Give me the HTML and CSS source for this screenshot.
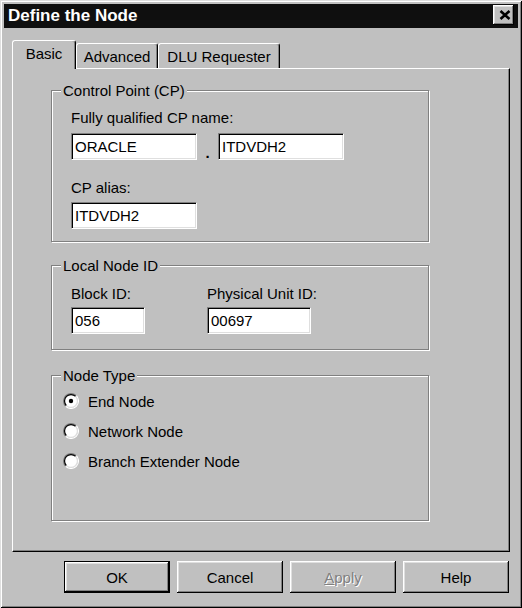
FILE: index.html
```html
<!DOCTYPE html>
<html>
<head>
<meta charset="utf-8">
<title>Define the Node</title>
<link rel="stylesheet" href="styles.css">
</head>
<body>
<div class="window">
  <div class="titlebar">
    <span class="title">Define the Node</span>
    <div class="close">
      <svg width="12" height="10" viewBox="0 0 12 10"><path d="M1.5 1 L10.5 9 M10.5 1 L1.5 9" stroke="#000" stroke-width="2.6" fill="none"/></svg>
    </div>
  </div>
  <div class="content">
    <div class="tabs">
      <div class="tab tab-basic active">Basic</div>
      <div class="tab tab-adv">Advanced</div>
      <div class="tab tab-dlu">DLU Requester</div>
    </div>
    <div class="panel">
      <div class="group group-cp">
        <div class="legend">Control Point (CP)</div>
        <div class="label label-fq">Fully qualified CP name:</div>
        <div class="row-cp">
          <div class="field w-name">ORACLE</div>
          <span class="dot">.</span>
          <div class="field w-name">ITDVDH2</div>
        </div>
        <div class="label label-alias">CP alias:</div>
        <div class="field w-name field-alias">ITDVDH2</div>
      </div>

      <div class="group group-local">
        <div class="legend">Local Node ID</div>
        <div class="cols">
          <div class="col">
            <div class="label label-id">Block ID:</div>
            <div class="field field-id w-block">056</div>
          </div>
          <div class="col">
            <div class="label label-id">Physical Unit ID:</div>
            <div class="field field-id w-pu">00697</div>
          </div>
        </div>
      </div>

      <div class="group group-type">
        <div class="legend">Node Type</div>
        <div class="radios">
          <div class="radio-row">
            <svg class="radio" width="16" height="16" viewBox="0 0 16 16">
              <circle cx="8" cy="8" r="6.5" fill="#fff"/>
              <path d="M2.697 13.303 A7.5 7.5 0 0 1 13.303 2.697" stroke="#808080" stroke-width="1.2" fill="none"/>
              <path d="M13.303 2.697 A7.5 7.5 0 0 1 2.697 13.303" stroke="#fff" stroke-width="1.2" fill="none"/>
              <path d="M3.404 12.596 A6.5 6.5 0 0 1 12.596 3.404" stroke="#000" stroke-width="1.2" fill="none"/>
              <path d="M12.596 3.404 A6.5 6.5 0 0 1 3.404 12.596" stroke="#dfdfdf" stroke-width="1.2" fill="none"/>
              <circle cx="8" cy="8" r="2.2" fill="#000"/>
            </svg>
            <span>End Node</span>
          </div>
          <div class="radio-row">
            <svg class="radio" width="16" height="16" viewBox="0 0 16 16">
              <circle cx="8" cy="8" r="6.5" fill="#fff"/>
              <path d="M2.697 13.303 A7.5 7.5 0 0 1 13.303 2.697" stroke="#808080" stroke-width="1.2" fill="none"/>
              <path d="M13.303 2.697 A7.5 7.5 0 0 1 2.697 13.303" stroke="#fff" stroke-width="1.2" fill="none"/>
              <path d="M3.404 12.596 A6.5 6.5 0 0 1 12.596 3.404" stroke="#000" stroke-width="1.2" fill="none"/>
              <path d="M12.596 3.404 A6.5 6.5 0 0 1 3.404 12.596" stroke="#dfdfdf" stroke-width="1.2" fill="none"/>
            </svg>
            <span>Network Node</span>
          </div>
          <div class="radio-row">
            <svg class="radio" width="16" height="16" viewBox="0 0 16 16">
              <circle cx="8" cy="8" r="6.5" fill="#fff"/>
              <path d="M2.697 13.303 A7.5 7.5 0 0 1 13.303 2.697" stroke="#808080" stroke-width="1.2" fill="none"/>
              <path d="M13.303 2.697 A7.5 7.5 0 0 1 2.697 13.303" stroke="#fff" stroke-width="1.2" fill="none"/>
              <path d="M3.404 12.596 A6.5 6.5 0 0 1 12.596 3.404" stroke="#000" stroke-width="1.2" fill="none"/>
              <path d="M12.596 3.404 A6.5 6.5 0 0 1 3.404 12.596" stroke="#dfdfdf" stroke-width="1.2" fill="none"/>
            </svg>
            <span>Branch Extender Node</span>
          </div>
        </div>
      </div>
    </div>
    <div class="buttons">
      <div class="btn default">OK</div>
      <div class="btn">Cancel</div>
      <div class="btn disabled"><u>A</u>pply</div>
      <div class="btn">Help</div>
    </div>
  </div>
</div>
</body>
</html>
```

FILE: styles.css
```css
html, body {
  margin: 0;
  padding: 0;
}

body {
  background: #c0c0c0;
  font-family: "Liberation Sans", Arial, sans-serif;
  font-size: 15px;
  line-height: 17px;
  color: #000;
}

.window {
  width: 522px;
  height: 608px;
  box-sizing: border-box;
  padding: 4px;
  background: #c0c0c0;
  box-shadow: inset 1px 1px 0 #dfdfdf, inset -1px -1px 0 #000, inset 2px 2px 0 #fff, inset -2px -2px 0 #808080;
}

.titlebar {
  height: 24px;
  background: #0f0f0f;
  display: flex;
  justify-content: space-between;
  align-items: flex-start;
}

.title {
  color: #fff;
  font-weight: bold;
  font-size: 17px;
  line-height: 24px;
  padding-left: 4px;
}

.close {
  width: 21px;
  height: 20px;
  margin: 1px 4px 0 0;
  box-sizing: border-box;
  background: #c0c0c0;
  box-shadow: inset -1px -1px 0 #000, inset 1px 1px 0 #fff, inset -2px -2px 0 #808080, inset 2px 2px 0 #dfdfdf;
  display: flex;
  align-items: center;
  justify-content: center;
  padding: 0 0 1px 2px;
}

.close svg {
  display: block;
}

.content {
  padding: 12px 4px 0 8px;
}

.tabs {
  display: flex;
  align-items: flex-end;
  height: 28px;
}

.tab {
  box-sizing: border-box;
  height: 25px;
  border: 1px solid;
  border-color: #fff #000 transparent #fff;
  border-bottom: none;
  border-radius: 3px 3px 0 0;
  box-shadow: inset -1px 0 0 #808080;
  text-align: center;
  padding-top: 4px;
  line-height: 17px;
  background: #c0c0c0;
}

.tab.active {
  height: 29px;
  margin-bottom: -1px;
  position: relative;
  z-index: 1;
}

.tab-basic { width: 64px; }
.tab-adv { width: 82px; }
.tab-dlu { width: 122px; }

.panel {
  box-sizing: border-box;
  width: 498px;
  height: 484px;
  border: 1px solid;
  border-color: #fff #000 #000 #fff;
  box-shadow: inset -1px -1px 0 #808080;
  padding: 21px 0 0 38px;
}

.group {
  width: 378px;
  box-sizing: border-box;
  border: 1px solid #808080;
  box-shadow: inset 1px 1px 0 #fff, 1px 1px 0 #fff;
  padding: 0 0 0 19px;
}

.legend {
  display: block;
  width: fit-content;
  margin: -9px 0 0 -10px;
  padding: 0 2px;
  background: #c0c0c0;
  line-height: 17px;
}

.label {
  line-height: 17px;
  white-space: nowrap;
}

.label-fq { margin-top: 10px; }
.label-alias { margin-top: 19px; }

.row-cp {
  display: flex;
  margin-top: 7px;
}

.dot {
  width: 21px;
  text-align: center;
  align-self: flex-end;
  font-weight: bold;
  line-height: 17px;
  margin-bottom: -1px;
}

.field {
  box-sizing: border-box;
  height: 27px;
  background: #fff;
  border: 1px solid;
  border-color: #808080 #fff #fff #808080;
  box-shadow: inset 1px 1px 0 #000, inset -1px -1px 0 #dfdfdf;
  padding: 4px 3px;
  line-height: 17px;
  white-space: nowrap;
}

.w-name { width: 126px; }
.w-block { width: 74px; }
.w-pu { width: 104px; }

.field-alias { margin-top: 6px; }

.group-cp {
  margin-top: 0;
  padding-bottom: 12px;
}

.group-local {
  margin-top: 23px;
  padding-bottom: 15px;
}

.cols {
  display: grid;
  grid-template-columns: 136px auto;
}

.label-id { margin-top: 11px; }
.field-id { margin-top: 5px; }

.group-type {
  margin-top: 25px;
  padding: 0 0 44px 11px;
}

.group-type .legend {
  margin-left: -2px;
}

.radios {
  margin-top: 2px;
}

.radio-row {
  display: flex;
  align-items: center;
  height: 30px;
}

.radio {
  display: block;
  margin-right: 9px;
}

.buttons {
  display: flex;
  gap: 7px;
  margin-top: 9px;
  padding-left: 52px;
}

.btn {
  box-sizing: border-box;
  width: 106px;
  height: 32px;
  display: flex;
  align-items: center;
  justify-content: center;
  box-shadow: inset -1px -1px 0 #000, inset 1px 1px 0 #fff, inset -2px -2px 0 #808080, inset 2px 2px 0 #dfdfdf;
  line-height: 17px;
}

.btn.default {
  border: 1px solid #000;
}

.btn.disabled {
  color: #808080;
  text-shadow: 1px 1px 0 #fff;
}
```
